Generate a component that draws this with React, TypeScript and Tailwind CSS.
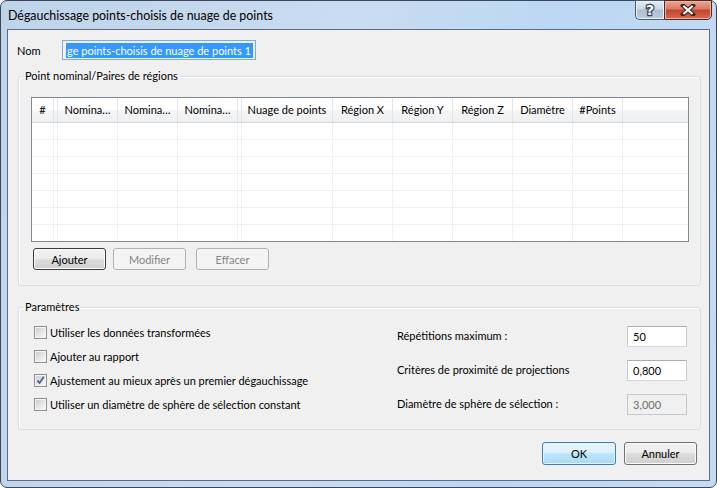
import React from "react";

const ui = "[font-family:'Segoe_UI',Lato,'Liberation_Sans',sans-serif] text-[11px] leading-[15px] text-black";

const columns: { label: string; w: string }[] = [
  { label: "#", w: "w-[22px]" },
  { label: "", w: "w-[4px]" },
  { label: "Nomina…", w: "w-[60px]" },
  { label: "Nomina…", w: "w-[60px]" },
  { label: "Nomina…", w: "w-[60px]" },
  { label: "", w: "w-[4px]" },
  { label: "Nuage de points", w: "w-[91px]" },
  { label: "Région X", w: "w-[60px]" },
  { label: "Région Y", w: "w-[60px]" },
  { label: "Région Z", w: "w-[60px]" },
  { label: "Diamètre", w: "w-[60px]" },
  { label: "#Points", w: "w-[50px]" },
];

function Button({
  children,
  kind = "normal",
  className = "",
}: {
  children: React.ReactNode;
  kind?: "normal" | "focus" | "disabled" | "default";
  className?: string;
}) {
  const styles = {
    normal:
      "border-[#707070] bg-[linear-gradient(#f2f2f2_0%,#ebebeb_50%,#dddddd_50%,#cfcfcf_100%)] shadow-[inset_0_0_0_1px_#fbfbfb]",
    focus:
      "border-[#3c3c3c] bg-[linear-gradient(#f2f2f2_0%,#ebebeb_50%,#dddddd_50%,#cfcfcf_100%)] shadow-[inset_0_0_0_1px_#fbfbfb]",
    disabled: "border-[#adb2b5] bg-[#f4f4f4] text-[#838383]",
    default:
      "border-[#3c7fb1] bg-[linear-gradient(#eaf6fd_0%,#d9f0fc_50%,#bee6fd_50%,#a7d9f5_100%)] shadow-[inset_0_0_0_1px_#e4f4fc]",
  }[kind];
  return (
    <div
      className={`flex h-[22px] w-[73px] items-center justify-center rounded-[3px] border ${styles} ${className}`}
    >
      {children}
    </div>
  );
}

function CheckBox({ checked }: { checked?: boolean }) {
  return (
    <div className="h-[13px] w-[13px] shrink-0 border border-[#8e8f8f] bg-[#f4f4f4] p-[1px]">
      <div className="flex h-full w-full items-center justify-center bg-gradient-to-br from-[#cdd0d4] to-[#f7f7f7]">
        {checked && (
          <svg width="9" height="9" viewBox="0 0 9 9">
            <path d="M1.5 4.5 L3.5 7 L7.8 0.8" fill="none" stroke="#4a5f97" strokeWidth="1.8" strokeLinejoin="round" />
          </svg>
        )}
      </div>
    </div>
  );
}

function TextBox({ value, disabled }: { value: string; disabled?: boolean }) {
  return (
    <div
      className={`flex h-[21px] w-[60px] items-center border pl-[5px] ${
        disabled
          ? "border-[#c5c8cd] bg-[#f0f0f0] text-[#6d6d6d]"
          : "border-t-[#abadb3] border-x-[#c9ccd3] border-b-[#d5d9df] bg-white"
      }`}
    >
      {value}
    </div>
  );
}

export default function App() {
  return (
    <div className={`h-[488px] w-[717px] bg-white ${ui}`}>
      <div className="flex h-[488px] w-[717px] flex-col rounded-[7px] border border-[#3a475a] bg-[linear-gradient(100deg,#bfd3e9_0%,#c9dcf1_45%,#bcd7f3_70%,#c4dbf2_100%)] px-[6px] pb-[6px]">
        {/* title bar */}
        <div className="flex h-[28px] items-start">
          <div className="pl-[1px] pt-[7px] text-[12.4px]">Dégauchissage points-choisis de nuage de points</div>
          <div className="-mr-[2px] -mt-[1px] ml-auto flex">
            <div className="flex h-[20px] w-[29px] items-center justify-center rounded-bl-[5px] border border-r-0 border-[#4a5a70] bg-[linear-gradient(#e3ebf4_0%,#c9d6e5_45%,#aebfd3_50%,#bccbdc_100%)] shadow-[inset_0_0_0_1px_#eef3f8]">
              <span className="[font-family:'DejaVu_Sans',sans-serif] text-[14px] font-bold leading-none text-white [-webkit-text-stroke:2.5px_#34435a] [paint-order:stroke_fill]">
                ?
              </span>
            </div>
            <div className="flex h-[20px] w-[48px] items-center justify-center rounded-br-[5px] border border-[#4a2a24] bg-[linear-gradient(#eaa896_0%,#d97a64_45%,#c4432c_50%,#d56a52_100%)] shadow-[inset_0_0_0_1px_#f0b4a6]">
              <svg width="16" height="12" viewBox="0 0 16 12">
                <path d="M3 1.5 L13 10.5 M13 1.5 L3 10.5" stroke="#3a2520" strokeWidth="4.2" strokeLinecap="square" />
                <path d="M3.4 2 L12.6 10 M12.6 2 L3.4 10" stroke="#ffffff" strokeWidth="2.2" />
              </svg>
            </div>
          </div>
        </div>

        {/* client area */}
        <div className="flex flex-1 flex-col border border-[#5d6c80] bg-[#f0f0f0]">
          {/* Nom */}
          <div className="ml-[9px] mt-[10px] flex h-[20px] items-center">
            <div className="w-[45px]">Nom</div>
            <div className="flex h-[20px] w-[194px] items-center border border-[#7fa9d9] pl-[3px]">
              <span className="whitespace-nowrap bg-[#3399ff] px-[1px] pr-[2px] text-white">ge points-choisis de nuage de points 1</span>
            </div>
          </div>

          {/* Point nominal / Paires de régions */}
          <fieldset className="ml-[10px] mr-[8px] mt-[8px] h-[218px] rounded-[3px] border border-[#d5dfe5] shadow-[inset_1px_1px_0_#ffffff]">
            <legend className="ml-[5px] px-[1px] leading-[16px]">Point nominal/Paires de régions</legend>
            <div className="ml-[12px] mt-[13px] flex h-[145px] w-[658px] flex-col overflow-hidden border border-[#828790] bg-white">
              <div className="flex h-[25px] shrink-0 border-b border-[#d5d5d5] bg-[linear-gradient(#ffffff_0%,#ffffff_45%,#f3f4f6_55%,#eef0f2_100%)]">
                {columns.map((c, i) => (
                  <div key={i} className={`${c.w} flex shrink-0 items-center justify-center border-r border-[#e2e4e7] pb-[1px]`}>
                    {c.label}
                  </div>
                ))}
              </div>
              {Array.from({ length: 7 }).map((_, r) => (
                <div key={r} className="flex h-[17px] shrink-0 border-b border-[#f0f0f0]">
                  {columns.map((c, i) => (
                    <div key={i} className={`${c.w} shrink-0 border-r border-[#f0f0f0]`} />
                  ))}
                </div>
              ))}
            </div>
            <div className="ml-[14px] mt-[6px] flex">
              <Button kind="focus">Ajouter</Button>
              <Button kind="disabled" className="ml-[7px] w-[72px]">
                Modifier
              </Button>
              <Button kind="disabled" className="ml-[10px]">
                Effacer
              </Button>
            </div>
          </fieldset>

          {/* Paramètres */}
          <fieldset className="ml-[10px] mr-[8px] mt-[13px] h-[131px] rounded-[3px] border border-[#d5dfe5] shadow-[inset_1px_1px_0_#ffffff]">
            <legend className="ml-[5px] px-[1px] leading-[16px]">Paramètres</legend>
            <div className="mt-[11px] flex">
              <div className="ml-[15px] flex w-[363px] flex-col gap-[11px]">
                {[
                  ["Utiliser les données transformées", false],
                  ["Ajouter au rapport", false],
                  ["Ajustement au mieux après un premier dégauchissage", true],
                  ["Utiliser un diamètre de sphère de sélection constant", false],
                ].map(([label, checked], i) => (
                  <div key={i} className="flex h-[13px] items-center gap-[3px]">
                    <CheckBox checked={checked as boolean} />
                    <span className="whitespace-nowrap">{label as string}</span>
                  </div>
                ))}
              </div>
              <div className="mr-[13px] flex flex-1 flex-col gap-[13px]">
                <div className="flex items-center">
                  <div className="flex-1 pb-[3px]">Répétitions maximum :</div>
                  <TextBox value="50" />
                </div>
                <div className="flex items-center">
                  <div className="flex-1 pb-[3px]">Critères de proximité de projections</div>
                  <TextBox value="0,800" />
                </div>
                <div className="flex items-center">
                  <div className="flex-1 pb-[3px]">Diamètre de sphère de sélection :</div>
                  <TextBox value="3,000" disabled />
                </div>
              </div>
            </div>
          </fieldset>

          {/* OK / Annuler */}
          <div className="mr-[12px] mt-[12px] flex justify-end gap-[8px]">
            <Button kind="default" className="h-[23px] w-[74px]">
              OK
            </Button>
            <Button className="h-[23px] w-[72px]">Annuler</Button>
          </div>
        </div>
      </div>
    </div>
  );
}
